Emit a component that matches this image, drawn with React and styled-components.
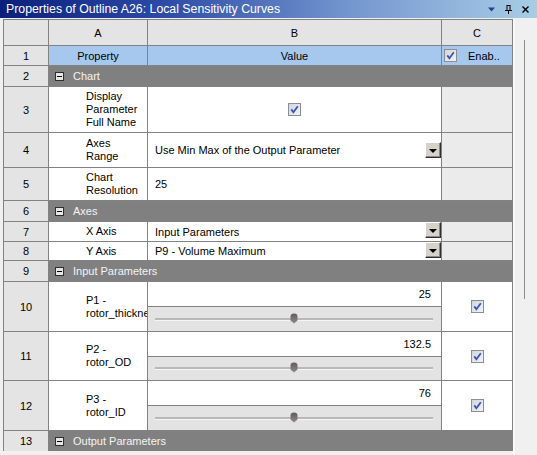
import React from 'react';
import styled, { createGlobalStyle } from 'styled-components';

const GlobalStyle = createGlobalStyle`
  html, body {
    margin: 0;
    padding: 0;
    background: #f0f0f0;
  }
  body {
    font-family: "Liberation Sans", Arial, sans-serif;
    font-size: 11px;
    color: #000;
  }
`;

const Panel = styled.div`
  width: 537px;
  height: 455px;
  overflow: hidden;
  background: #f0f0f0;
  display: flex;
  flex-direction: column;
`;

const TitleBar = styled.div`
  height: 18px;
  flex: none;
  display: flex;
  align-items: center;
  padding: 0 8px 0 6px;
  background: linear-gradient(to right, #0a1f7c 0%, #2c4aa6 30%, #7496cf 65%, #a8cde6 100%);
  color: #fff;
  font-size: 12.3px;
`;

const Title = styled.span`
  flex: 1;
  white-space: nowrap;
`;

const TitleTools = styled.div`
  display: flex;
  align-items: center;
  gap: 10px;
`;

const Body = styled.div`
  flex: 1;
  display: flex;
  padding: 1px 0 0 3px;
  min-height: 0;
`;

const Grid = styled.div`
  flex: none;
  width: 510px;
  display: grid;
  grid-template-columns: 44px 98px 293px 70px;
  grid-template-rows: 25px 19px 20px 45px 34px 32px 20px 19px 18px 20px 49px 48px 49px 20px;
  gap: 1px;
  padding: 1px 1px 0 1px;
  box-sizing: border-box;
  background: #828282;
  align-self: flex-start;
`;

const HeadCell = styled.div`
  background: #e4e4e4;
  display: flex;
  align-items: center;
  justify-content: center;
`;

const RowNum = styled(HeadCell)``;

const Cell = styled.div`
  background: ${p => (p.$tone === 'blue' ? '#a6c8ef' : p.$tone === 'off' ? '#ebebeb' : '#fff')};
  display: flex;
  align-items: center;
  justify-content: ${p => p.$justify || 'flex-start'};
  overflow: hidden;
  min-width: 0;
`;

const NameCell = styled(Cell)`
  padding-left: 37px;
  white-space: pre;
  line-height: 13px;
`;

const ValueCell = styled(Cell)`
  padding-left: 7px;
  justify-content: space-between;
`;

const EnableCell = styled(Cell)`
  padding-left: 2px;
  gap: 11px;
`;

const Section = styled.div`
  grid-column: 2 / 5;
  background: #808080;
  color: #f4f4f4;
  display: flex;
  align-items: center;
  padding-left: 6px;
  gap: 9px;
`;

const MinusBox = styled.span`
  width: 7px;
  height: 7px;
  border: 1px solid #2e2e2e;
  background: #e6e6e6;
  display: flex;
  align-items: center;
  justify-content: center;
  &::after {
    content: '';
    width: 5px;
    height: 1px;
    background: #000;
  }
`;

const ComboButton = styled.span`
  flex: none;
  width: 14px;
  height: 14px;
  align-self: ${p => (p.$top ? 'flex-start' : 'center')};
  background: #d6d2ca;
  border: 1px solid;
  border-color: #fff #303030 #303030 #fff;
  box-shadow: inset -1px -1px 0 #8a8a8a;
  display: flex;
  align-items: center;
  justify-content: center;
  &::after {
    content: '';
    border-left: 4px solid transparent;
    border-right: 4px solid transparent;
    border-top: 4px solid #000;
    margin-top: 1px;
  }
`;

const SliderCell = styled.div`
  display: flex;
  flex-direction: column;
  gap: 1px;
  background: #828282;
`;

const SliderValue = styled.div`
  height: 24px;
  flex: none;
  background: #fff;
  display: flex;
  align-items: center;
  justify-content: flex-end;
  padding-right: 10px;
`;

const SliderArea = styled.div`
  flex: 1;
  background: #e3e3e3;
  display: flex;
  align-items: center;
  padding: 0 8px 0 7px;
`;

const Track = styled.div`
  position: relative;
  flex: 1;
  height: 2px;
  background: #b8b8b8;
  border-bottom: 1px solid #f6f6f6;
`;

const Thumb = styled.svg`
  position: absolute;
  top: -5px;
  margin-left: -4px;
`;

const ScrollCol = styled.div`
  flex: 1;
  display: flex;
  justify-content: center;
  padding-right: 4px;
  border-left: 2px solid #f8f8f8;
`;

const ScrollLine = styled.div`
  width: 1px;
  height: 259px;
  margin-top: 21px;
  background: #8c8c8c;
`;

const CheckBox = () => (
  <svg width="13" height="13" viewBox="0 0 13 13">
    <defs>
      <linearGradient id="cbg" x1="0" y1="0" x2="1" y2="1">
        <stop offset="0" stopColor="#cfd3dc" />
        <stop offset="1" stopColor="#f4f5f8" />
      </linearGradient>
    </defs>
    <rect x="0.5" y="0.5" width="12" height="12" fill="url(#cbg)" stroke="#8c8e94" />
    <path d="M3.3 6.4 L5.4 9.2 L9.8 3.2" fill="none" stroke="#3a54b4" strokeWidth="1.8" />
  </svg>
);

const SliderThumb = ({ pos }) => (
  <Thumb width="8" height="11" viewBox="0 0 8 11" style={{ left: `${pos * 100}%` }}>
    <defs>
      <linearGradient id="thg" x1="0" y1="0" x2="0" y2="1">
        <stop offset="0" stopColor="#5e5a5e" />
        <stop offset="1" stopColor="#8e8a8e" />
      </linearGradient>
    </defs>
    <path d="M0.5 3.5 Q0.5 0.5 4 0.5 Q7.5 0.5 7.5 3.5 L7.5 7.5 L4 10.5 L0.5 7.5 Z" fill="url(#thg)" />
  </Thumb>
);

const rows = [
  { kind: 'section', label: 'Chart' },
  { kind: 'check', name: 'Display\nParameter\nFull Name' },
  { kind: 'combo', name: 'Axes\nRange', value: 'Use Min Max of the Output Parameter' },
  { kind: 'text', name: 'Chart\nResolution', value: '25' },
  { kind: 'section', label: 'Axes' },
  { kind: 'combo', name: 'X Axis', value: 'Input Parameters', top: true },
  { kind: 'combo', name: 'Y Axis', value: 'P9 - Volume Maximum', top: true },
  { kind: 'section', label: 'Input Parameters' },
  { kind: 'slider', name: 'P1 -\nrotor_thickness', value: '25', pos: 0.5 },
  { kind: 'slider', name: 'P2 -\nrotor_OD', value: '132.5', pos: 0.5 },
  { kind: 'slider', name: 'P3 -\nrotor_ID', value: '76', pos: 0.5 },
  { kind: 'section', label: 'Output Parameters' },
];

const renderRow = (row, n) => {
  const num = <RowNum key={`n${n}`}>{n}</RowNum>;
  if (row.kind === 'section') {
    return [
      num,
      <Section key={`s${n}`}>
        <MinusBox />
        {row.label}
      </Section>,
    ];
  }
  const name = <NameCell key={`a${n}`}>{row.name}</NameCell>;
  let value;
  let enable = <Cell key={`c${n}`} $tone="off" />;
  if (row.kind === 'check') {
    value = (
      <Cell key={`b${n}`} $justify="center">
        <CheckBox />
      </Cell>
    );
  } else if (row.kind === 'combo') {
    value = (
      <ValueCell key={`b${n}`}>
        <span>{row.value}</span>
        <ComboButton $top={row.top} />
      </ValueCell>
    );
  } else if (row.kind === 'text') {
    value = <ValueCell key={`b${n}`}>{row.value}</ValueCell>;
  } else {
    value = (
      <SliderCell key={`b${n}`}>
        <SliderValue>{row.value}</SliderValue>
        <SliderArea>
          <Track>
            <SliderThumb pos={row.pos} />
          </Track>
        </SliderArea>
      </SliderCell>
    );
    enable = (
      <Cell key={`c${n}`} $justify="center">
        <CheckBox />
      </Cell>
    );
  }
  return [num, name, value, enable];
};

const App = () => (
  <>
    <GlobalStyle />
    <Panel>
      <TitleBar>
        <Title>Properties of Outline A26: Local Sensitivity Curves</Title>
        <TitleTools>
          <svg width="7" height="5" viewBox="0 0 7 5">
            <path d="M0 0.5 H7 L3.5 4.5 Z" fill="#28408e" />
          </svg>
          <svg width="7" height="9" viewBox="0 0 7 9">
            <path d="M1.5 0.5 H5.5 M2 0.5 V5 M5 0.5 V5 M0 5.5 H7 M3.5 5.5 V9" stroke="#000" strokeWidth="1" fill="none" />
          </svg>
          <svg width="7" height="7" viewBox="0 0 7 7">
            <path d="M0.5 0.5 L6.5 6.5 M6.5 0.5 L0.5 6.5" stroke="#000" strokeWidth="1.4" />
          </svg>
        </TitleTools>
      </TitleBar>
      <Body>
        <Grid>
          <HeadCell />
          <HeadCell>A</HeadCell>
          <HeadCell>B</HeadCell>
          <HeadCell>C</HeadCell>
          <RowNum>1</RowNum>
          <Cell $tone="blue" $justify="center">Property</Cell>
          <Cell $tone="blue" $justify="center">Value</Cell>
          <EnableCell $tone="blue">
            <CheckBox />
            Enab..
          </EnableCell>
          {rows.map((row, i) => renderRow(row, i + 2))}
        </Grid>
        <ScrollCol>
          <ScrollLine />
        </ScrollCol>
      </Body>
    </Panel>
  </>
);

export default App;
